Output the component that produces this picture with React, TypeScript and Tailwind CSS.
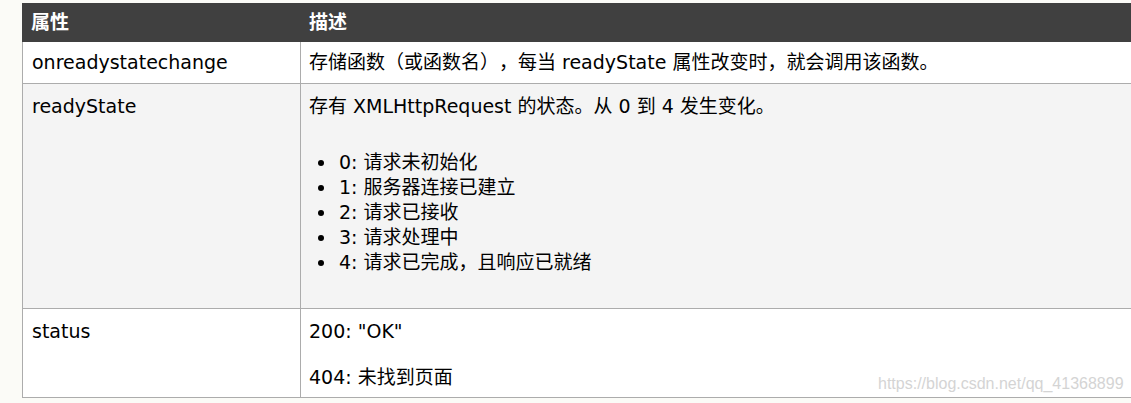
import React from "react";

const font = { fontFamily: '"DejaVu Sans", "Noto Sans CJK SC", sans-serif' };

const states = [
  "0: 请求未初始化",
  "1: 服务器连接已建立",
  "2: 请求已接收",
  "3: 请求处理中",
  "4: 请求已完成，且响应已就绪",
];

export default function App() {
  return (
    <div
      className="relative w-[1131px] h-[403px] overflow-hidden bg-[#fbfbf7] text-[19px] leading-[25px] text-black [text-spacing-trim:space-all]"
      style={font}
    >
      <div className="ml-[22px] mt-[3px] w-[1120px]">
        {/* header */}
        <div className="flex h-[39px] items-center bg-[#404040] font-bold text-white">
          <div className="w-[278px] pl-[9px]">属性</div>
          <div className="pl-[9px]">描述</div>
        </div>
        <div className="border-l border-[#acacac]">
          {/* row 1 */}
          <div className="flex h-[42px] border-b border-[#acacac] bg-white">
            <div className="w-[278px] shrink-0 border-r border-[#acacac] pl-[9px] pt-[8px]">
              onreadystatechange
            </div>
            <div className="pl-[8px] pt-[8px]">
              存储函数（或函数名），每当 readyState 属性改变时，就会调用该函数。
            </div>
          </div>
          {/* row 2 */}
          <div className="flex h-[225px] border-b border-[#acacac] bg-[#f4f4f4]">
            <div className="w-[278px] shrink-0 border-r border-[#acacac] pl-[9px] pt-[10px]">
              readyState
            </div>
            <div className="pt-[10px]">
              <p className="pl-[8px]">存有 XMLHttpRequest 的状态。从 0 到 4 发生变化。</p>
              <ul className="mt-[31px]">
                {states.map((s) => (
                  <li key={s} className="flex items-center">
                    <span className="ml-[17px] mr-[15px] h-[6px] w-[6px] rounded-full bg-black" />
                    <span>{s}</span>
                  </li>
                ))}
              </ul>
            </div>
          </div>
          {/* row 3 */}
          <div className="flex h-[89px] border-b border-[#acacac] bg-white">
            <div className="w-[278px] shrink-0 border-r border-[#acacac] pl-[9px] pt-[10px]">
              status
            </div>
            <div className="pl-[8px] pt-[10px]">
              <p>200: "OK"</p>
              <p className="mt-[21px]">404: 未找到页面</p>
            </div>
          </div>
        </div>
      </div>
      <div
        className="absolute left-[878px] top-[376px] text-[16px] leading-none text-[#d4d4d4]"
        style={{ fontFamily: '"Liberation Sans", Arial, sans-serif' }}
      >
        https://blog.csdn.net/qq_41368899
      </div>
    </div>
  );
}
